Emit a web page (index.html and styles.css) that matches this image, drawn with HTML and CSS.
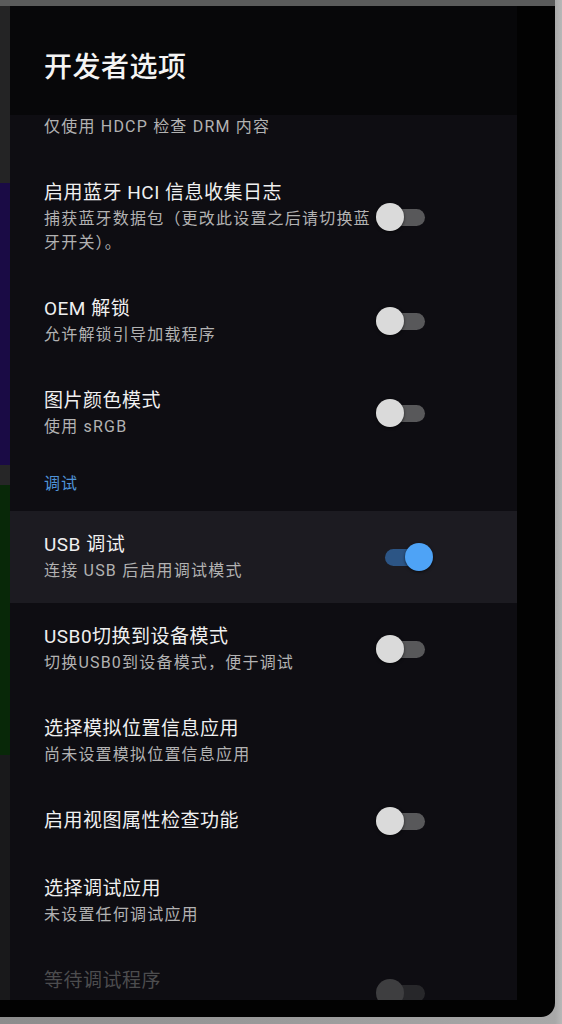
FILE: index.html
```html
<!DOCTYPE html>
<html lang="zh-CN">

	<head>
		<meta charset="UTF-8">
		<title>开发者选项</title>
		<link rel="stylesheet" href="styles.css">
	</head>

	<body>
		<div class="frame">
			<div class="topbar"></div>
			<div class="screen">
				<div class="content">
					<!-- 后面应用露出的一条边 -->
					<div class="behind">
						<div class="behind-grey"></div>
						<div class="behind-purple"></div>
						<div class="behind-gap"></div>
						<div class="behind-green"></div>
						<div class="behind-dark"></div>
					</div>

					<div class="panel">
						<div class="panel-header">开发者选项</div>
						<div class="pref-list">
							<!-- 列表已滚动，上一项只露出摘要 -->
							<div class="pref scrolled">
								<div class="pref-text">
									<div class="pref-summary">仅使用 HDCP 检查 DRM 内容</div>
								</div>
							</div>
							<div class="pref">
								<div class="pref-text">
									<div class="pref-title">启用蓝牙 HCI 信息收集日志</div>
									<div class="pref-summary">捕获蓝牙数据包（更改此设置之后请切换蓝牙开关）。</div>
								</div>
								<span class="switch"><span class="thumb"></span></span>
							</div>
							<div class="pref">
								<div class="pref-text">
									<div class="pref-title">OEM 解锁</div>
									<div class="pref-summary">允许解锁引导加载程序</div>
								</div>
								<span class="switch"><span class="thumb"></span></span>
							</div>
							<div class="pref">
								<div class="pref-text">
									<div class="pref-title">图片颜色模式</div>
									<div class="pref-summary">使用 sRGB</div>
								</div>
								<span class="switch"><span class="thumb"></span></span>
							</div>

							<div class="pref-category">调试</div>

							<div class="pref focused">
								<div class="pref-text">
									<div class="pref-title">USB 调试</div>
									<div class="pref-summary">连接 USB 后启用调试模式</div>
								</div>
								<span class="switch on"><span class="thumb"></span></span>
							</div>
							<div class="pref">
								<div class="pref-text">
									<div class="pref-title">USB0切换到设备模式</div>
									<div class="pref-summary">切换USB0到设备模式，便于调试</div>
								</div>
								<span class="switch"><span class="thumb"></span></span>
							</div>
							<div class="pref">
								<div class="pref-text">
									<div class="pref-title">选择模拟位置信息应用</div>
									<div class="pref-summary">尚未设置模拟位置信息应用</div>
								</div>
							</div>
							<div class="pref">
								<div class="pref-text">
									<div class="pref-title">启用视图属性检查功能</div>
								</div>
								<span class="switch"><span class="thumb"></span></span>
							</div>
							<div class="pref">
								<div class="pref-text">
									<div class="pref-title">选择调试应用</div>
									<div class="pref-summary">未设置任何调试应用</div>
								</div>
							</div>
							<div class="pref disabled">
								<div class="pref-text">
									<div class="pref-title">等待调试程序</div>
								</div>
								<span class="switch"><span class="thumb"></span></span>
							</div>
						</div>
					</div>

					<div class="edge"></div>
				</div>
			</div>
		</div>
	</body>

</html>
```

FILE: styles.css
```css
html,
body {
	padding: 0;
	margin: 0;
}

body {
	width: 562px;
	height: 1024px;
	overflow: hidden;
	background: linear-gradient(to right, #8c8c8c 0, #a8a8a8 555px, #b8b8b8 562px);
	font-family: Roboto, "Noto Sans CJK SC", sans-serif;
}

.frame {
	width: 555px;
}

.topbar {
	height: 6px;
	background-color: #5a5b5b;
}

.screen {
	height: 1011px;
	background-color: #020202;
	border-bottom-right-radius: 14px;
	overflow: hidden;
}

.content {
	display: flex;
	height: 994px;
}

/* 左侧露出的背景 */
.behind {
	width: 10px;
	display: flex;
	flex-direction: column;
}

.behind-grey {
	height: 177px;
	background-color: #242425;
}

.behind-purple {
	height: 282px;
	background-color: #1a0b45;
}

.behind-gap {
	height: 20px;
	background-color: #262627;
}

.behind-green {
	height: 270px;
	background-color: #082808;
}

.behind-dark {
	flex: 1;
	background-color: #19191b;
}

/* 设置面板 */
.panel {
	width: 507px;
	display: flex;
	flex-direction: column;
	background-color: #0e0d12;
}

.panel-header {
	height: 64px;
	padding: 45px 0 0 34px;
	line-height: 34px;
	font-size: 28px;
	font-weight: 500;
	letter-spacing: 0.5px;
	color: #f4f4f4;
	background-color: #070709;
}

.pref-list {
	flex: 1;
	overflow: hidden;
}

.pref {
	display: flex;
	align-items: center;
	padding: 20px 83px 20px 34px;
}

.pref.scrolled {
	padding-top: 0;
}

.pref.focused {
	background-color: #1c1b21;
}

.pref-text {
	flex: 1;
}

.pref-title {
	font-size: 19px;
	line-height: 28px;
	letter-spacing: 0.5px;
	color: #f0f0f0;
}

.pref-summary {
	font-size: 16px;
	line-height: 24px;
	letter-spacing: 1.2px;
	color: #b2b2b2;
}

.pref.disabled .pref-text {
	min-height: 52px;
}

.pref.disabled .pref-title {
	color: #4c4c4e;
}

.pref-category {
	padding: 14px 34px 16px;
	font-size: 16px;
	line-height: 22px;
	letter-spacing: 1px;
	color: #4f93d8;
}

/* 开关 */
.switch {
	position: relative;
	width: 58px;
	height: 28px;
	flex-shrink: 0;
}

.switch::before {
	content: "";
	position: absolute;
	left: 9px;
	top: 6px;
	width: 40px;
	height: 17px;
	border-radius: 9px;
	background-color: #58585a;
}

.switch .thumb {
	position: absolute;
	left: 0;
	top: 0;
	width: 28px;
	height: 28px;
	border-radius: 50%;
	background-color: #dadada;
	box-shadow: 0 1px 3px rgba(0, 0, 0, 0.6);
}

.switch.on::before {
	background-color: #2c5585;
}

.switch.on .thumb {
	left: 29px;
	background-color: #4ea3f6;
}

.pref.disabled .switch::before {
	background-color: #27272a;
}

.pref.disabled .switch .thumb {
	background-color: #3e3e40;
	box-shadow: none;
}

.edge {
	flex: 1;
	background-color: #020202;
}
```
